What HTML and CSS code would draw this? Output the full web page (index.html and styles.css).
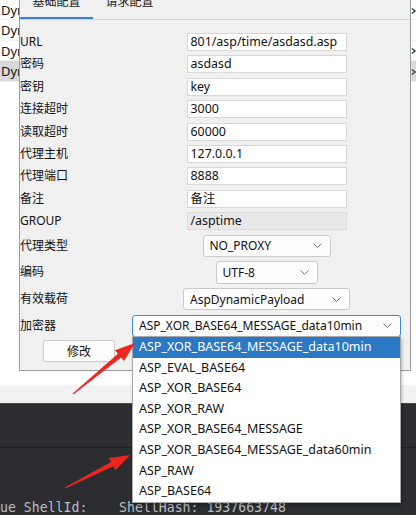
FILE: index.html
```html
<!DOCTYPE html>
<html lang="zh-CN">
<head>
<meta charset="utf-8">
<title>Shell 配置</title>
<link rel="stylesheet" href="styles.css">
</head>
<body>
<div class="screen">
  <div class="top">
    <div class="side side-left">
      <div class="row">Dyn</div>
      <div class="row">Dyn</div>
      <div class="row">Dyn</div>
      <div class="row selected">Dyn</div>
    </div>
    <div class="dialog">
      <div class="tabs">
        <div class="tab active">基础配置</div>
        <div class="tab">请求配置</div>
      </div>
      <div class="form">
        <label class="lbl">URL</label><div class="input">801/asp/time/asdasd.asp</div>
        <label class="lbl">密码</label><div class="input">asdasd</div>
        <label class="lbl">密钥</label><div class="input">key</div>
        <label class="lbl">连接超时</label><div class="input">3000</div>
        <label class="lbl">读取超时</label><div class="input">60000</div>
        <label class="lbl">代理主机</label><div class="input">127.0.0.1</div>
        <label class="lbl">代理端口</label><div class="input">8888</div>
        <label class="lbl">备注</label><div class="input">备注</div>
        <label class="lbl">GROUP</label><div class="input disabled">/asptime</div>
        <label class="lbl sel-row">代理类型</label>
        <div class="select w-proxy"><span>NO_PROXY</span><svg class="chev" width="9" height="5" viewBox="0 0 9 5"><path d="M0.5 0.5 L4.5 4.5 L8.5 0.5"/></svg></div>
        <label class="lbl sel-row">编码</label>
        <div class="select w-enc"><span>UTF-8</span><svg class="chev" width="9" height="5" viewBox="0 0 9 5"><path d="M0.5 0.5 L4.5 4.5 L8.5 0.5"/></svg></div>
        <label class="lbl sel-row">有效载荷</label>
        <div class="select w-payload"><span>AspDynamicPayload</span><svg class="chev" width="9" height="5" viewBox="0 0 9 5"><path d="M0.5 0.5 L4.5 4.5 L8.5 0.5"/></svg></div>
        <label class="lbl sel-row">加密器</label>
        <div class="select w-crypt focused"><span>ASP_XOR_BASE64_MESSAGE_data10min</span><svg class="chev" width="9" height="5" viewBox="0 0 9 5"><path d="M0.5 0.5 L4.5 4.5 L8.5 0.5"/></svg></div>
      </div>
      <div class="actions"><button class="btn">修改</button></div>
    </div>
    <div class="side side-right">
      <div class="row"><svg class="arr" width="6" height="8" viewBox="0 0 6 8"><path d="M1 1 L5 4 L1 7"/></svg></div>
      <div class="row"></div>
      <div class="row"><svg class="arr" width="6" height="8" viewBox="0 0 6 8"><path d="M1 1 L5 4 L1 7"/></svg></div>
      <div class="row selected"><svg class="arr" width="6" height="8" viewBox="0 0 6 8"><path d="M1 1 L5 4 L1 7"/></svg></div>
    </div>
  </div>
  <div class="band-white"></div>
  <div class="band-gray"></div>
  <div class="dark">
    <div class="dark-a"></div>
    <div class="dark-b"></div>
    <div class="console">ue ShellId:    ShellHash: 1937663748</div>
  </div>

  <div class="popup">
    <div class="item active">ASP_XOR_BASE64_MESSAGE_data10min</div>
    <div class="item">ASP_EVAL_BASE64</div>
    <div class="item">ASP_XOR_BASE64</div>
    <div class="item">ASP_XOR_RAW</div>
    <div class="item">ASP_XOR_BASE64_MESSAGE</div>
    <div class="item">ASP_XOR_BASE64_MESSAGE_data60min</div>
    <div class="item">ASP_RAW</div>
    <div class="item">ASP_BASE64</div>
  </div>

  <svg class="annot" width="416" height="515" viewBox="0 0 416 515">
    <polygon points="72.7,393.6 117.9,353.8 115.0,350.3 135,343 124.0,361.1 121.1,357.6 73.3,394.4"/>
    <polygon points="64.8,487.6 111.1,461.9 109.0,457.9 130,455 115.4,470.3 113.3,466.3 65.2,488.4"/>
  </svg>
</div>
</body>
</html>
```
FILE: styles.css
```css
* { box-sizing: border-box; }
html, body { margin: 0; padding: 0; }
body {
  width: 416px;
  height: 515px;
  overflow: hidden;
  background: #ffffff;
  font-family: "Noto Sans", "Noto Sans CJK SC", sans-serif;
  font-size: 12px;
  color: #111;
}
.screen { position: relative; width: 416px; height: 515px; overflow: hidden; }

.top { display: flex; height: 371px; }

.side { background: #fff; overflow: hidden; }
.side-left { width: 19px; }
.side-right { width: 5px; }
.side .row {
  height: 20.4px;
  line-height: 20px;
  font-size: 13px;
  white-space: nowrap;
  overflow: hidden;
  border-bottom: 1px solid #f1f1f1;
  color: #111;
}
.side-left .row { padding-left: 1px; }
.side .row.selected { background: #d9d9d9; }
.side-right .row { display: flex; align-items: center; padding-top: 2px; }
.arr path { fill: none; stroke: #33445a; stroke-width: 1.8; }

.dialog {
  width: 392px;
  margin-top: -10px;
  background: #f0f0f0;
  border-left: 1px solid #9c9c9c;
  border-right: 1px solid #9c9c9c;
  border-bottom: 1px solid #9c9c9c;
  display: flex;
  flex-direction: column;
}
.tabs {
  display: flex;
  height: 30px;
  border-bottom: 1px solid #d3d3d3;
}
.tab {
  width: 73px;
  height: 29px;
  line-height: 24px;
  text-align: center;
  color: #222;
}
.tab.active { box-shadow: inset 0 -2px 0 #3b7fd1; }

.form {
  display: grid;
  grid-template-columns: 112px 269px;
  row-gap: 4.4px;
  align-items: center;
  justify-items: center;
  padding-top: 13px;
}
.lbl { justify-self: start; color: #111; line-height: 18px; }
.input {
  width: 160px;
  height: 18px;
  line-height: 16px;
  padding: 0 3px;
  background: #fff;
  border: 1px solid #d8d8d8;
  color: #111;
  font-size: 12.4px;
  white-space: nowrap;
  overflow: hidden;
}
.input.disabled { background: #e9e9e9; border-color: #dcdcdc; }

.select {
  height: 22.3px;
  display: flex;
  align-items: center;
  justify-content: space-between;
  padding: 0 6px 0 6px;
  background: #fdfdfd;
  border: 1px solid #cacaca;
  border-radius: 3px;
  white-space: nowrap;
}
.select.focused { border-color: #3d86d8; }
.w-proxy { width: 128px; }
.w-enc { width: 102px; }
.w-payload { width: 167px; }
.w-crypt { width: 269px; }
.chev { flex: none; margin-right: 2px; }
.chev path { fill: none; stroke: #707070; stroke-width: 1; }

.actions { padding: 3.4px 0 0 23px; }
.btn {
  width: 72px;
  height: 22px;
  padding: 0;
  font: inherit;
  color: #111;
  background: #fdfdfd;
  border: 1px solid #cdcdcd;
  border-radius: 2px;
}

.band-white { height: 14px; background: #fff; }
.band-gray { height: 19px; background: #f2f2f2; border-bottom: 1px solid #3b4864; }
.dark { height: 111px; background: #2b2d30; display: flex; flex-direction: column; overflow: hidden; }
.dark-a { flex: none; height: 44px; border-bottom: 1px solid #1e1f22; }
.dark-b { flex: none; height: 34px; }
.console {
  flex: none;
  height: 33px;
  overflow: hidden;
  background: #2b2d30;
  font-family: "DejaVu Sans Mono", monospace;
  font-size: 13.2px;
  color: #bcbec4;
  white-space: pre;
  padding-top: 17px;
  line-height: 18px;
}

.popup {
  position: absolute;
  left: 132px;
  top: 336px;
  width: 269px;
  height: 167px;
  background: #fff;
  border: 1px solid #a8a8a8;
  box-shadow: 1px 2px 3px rgba(0,0,0,0.25);
}
.item {
  height: 20.6px;
  line-height: 20.6px;
  padding-left: 6px;
  font-size: 12.5px;
  color: #111;
  white-space: nowrap;
}
.item.active { background: #2b78c5; color: #fff; }

.annot { position: absolute; left: 0; top: 0; pointer-events: none; }
.annot polygon { fill: #ee2620; }
```
